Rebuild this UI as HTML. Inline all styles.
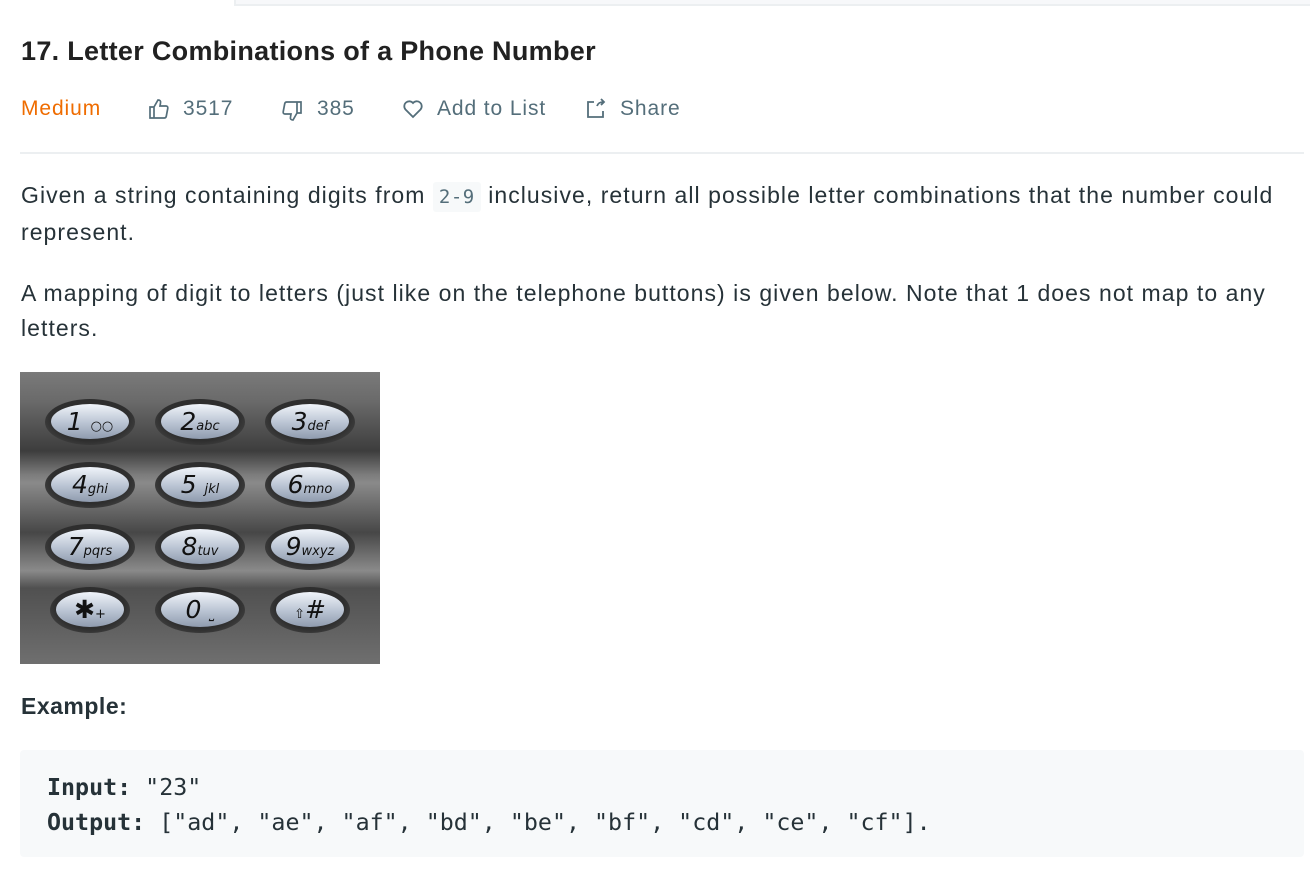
<!DOCTYPE html>
<html><head><meta charset="utf-8"><style>
*{margin:0;padding:0;box-sizing:border-box}
body{width:1310px;height:878px;overflow:hidden;background:#fff;font-family:"Liberation Sans",Helvetica,Arial,sans-serif;color:#263238;position:relative}
.top{position:absolute;left:234px;top:0;width:1076px;height:6px;background:#f7f8fa;border-left:2px solid #eceff1;border-bottom:2px solid #eceff1}
h1{position:absolute;left:21px;top:36px;font-size:27px;font-weight:600;color:#212121;letter-spacing:0.3px;white-space:nowrap}
.meta{position:absolute;top:96px;left:21px;font-size:21px;color:#546e7a;height:26px;line-height:26px;letter-spacing:0.9px}
.meta span{position:absolute;white-space:nowrap}
.meta svg{position:absolute;top:1px}
.hr{position:absolute;left:20px;top:152px;width:1284px;height:2px;background:#eceff1}
p{position:absolute;left:21px;font-size:23px;line-height:35px;width:1285px;letter-spacing:1.05px;white-space:nowrap}
code.i{font-family:"DejaVu Sans Mono",monospace;font-size:19px;background:#f7f9fa;color:#546e7a;padding:4px 6px;border-radius:3px;letter-spacing:0.5px}
.pad{position:absolute;left:20px;top:372px;width:360px;height:292px;background:linear-gradient(#7a7a7a 0%,#6a6a6a 10%,#3d3d3d 27%,#7b7b7b 35%,#8a8a8a 38%,#474747 55%,#8a8a8a 68%,#505050 74%,#6f6f6f 100%)}
.k{position:absolute;width:90px;height:46px;border-radius:50%;background:radial-gradient(ellipse at 50% 40%,#2e2e2e 60%,#555 100%)}
.k i{position:absolute;left:6px;top:5px;width:78px;height:35px;border-radius:50%;background:linear-gradient(#f0f4fa,#b9c3d2 55%,#8f9bae);font-style:italic;font-size:25px;color:#111;text-align:center;line-height:35px;font-family:"DejaVu Sans",sans-serif;font-weight:300}
.k i small{font-size:13px}
.ex{position:absolute;left:21px;top:693px;font-size:23px;font-weight:700;letter-spacing:0.5px}
pre{position:absolute;left:20px;top:750px;width:1284px;height:107px;background:#f7f9fa;border-radius:4px;padding:20px 27px;font-family:"DejaVu Sans Mono",monospace;font-size:23.3px;line-height:35px;color:#263238}
</style></head><body>
<div class="top"></div>
<h1>17. Letter Combinations of a Phone Number</h1>
<div class="meta">
<span style="left:0;color:#ef6c00">Medium</span>
<svg style="left:126px" width="24" height="24" viewBox="0 0 24 24" fill="none" stroke="#546e7a" stroke-width="1.7"><path d="M3 10h4v11H3zM7 10l4-7c2 0 3 1 2.5 3L13 9h6c1.3 0 2 1 1.8 2.2l-1.5 8c-.2 1-1 1.8-2 1.8H7"/></svg>
<span style="left:162px">3517</span>
<svg style="left:259px;top:3px" width="24" height="24" viewBox="0 0 24 24" fill="none" stroke="#546e7a" stroke-width="1.7"><path d="M21 14h-4V3h4zM17 14l-4 7c-2 0-3-1-2.5-3L11 15H5c-1.3 0-2-1-1.8-2.2l1.5-8C4.9 3.8 5.7 3 6.7 3H17"/></svg>
<span style="left:296px">385</span>
<svg style="left:380px" width="24" height="24" viewBox="0 0 24 24" fill="none" stroke="#546e7a" stroke-width="1.8"><path d="M12 20l-7.5-7.5A4.5 4.5 0 0 1 12 6a4.5 4.5 0 0 1 7.5 6.5z"/></svg>
<span style="left:416px">Add to List</span>
<svg style="left:563px" width="24" height="24" viewBox="0 0 24 24" fill="none" stroke="#546e7a" stroke-width="1.8"><path d="M10 5H4v15h15v-6M13 9c1-3 3-4 7-4M17 2l3 3-3 3"/></svg>
<span style="left:599px">Share</span>
</div>
<div class="hr"></div>
<p style="top:178px">Given a string containing digits from <code class="i">2-9</code> inclusive, return all possible letter combinations that the number could<br>represent.</p>
<p style="top:276px">A mapping of digit to letters (just like on the telephone buttons) is given below. Note that 1 does not map to any<br>letters.</p>
<div class="pad">
<div class="k" style="left:25px;top:27px"><i>1 <small>○○</small></i></div>
<div class="k" style="left:135px;top:27px"><i>2<small>abc</small></i></div>
<div class="k" style="left:245px;top:27px"><i>3<small>def</small></i></div>
<div class="k" style="left:25px;top:90px"><i>4<small>ghi</small></i></div>
<div class="k" style="left:135px;top:90px"><i>5 <small>jkl</small></i></div>
<div class="k" style="left:245px;top:90px"><i>6<small>mno</small></i></div>
<div class="k" style="left:25px;top:152px"><i>7<small>pqrs</small></i></div>
<div class="k" style="left:135px;top:152px"><i>8<small>tuv</small></i></div>
<div class="k" style="left:245px;top:152px"><i>9<small>wxyz</small></i></div>
<div class="k" style="left:30px;top:215px;width:80px"><i style="width:68px">✱<small>+</small></i></div>
<div class="k" style="left:135px;top:215px"><i>0 <small>⎵</small></i></div>
<div class="k" style="left:250px;top:215px;width:80px"><i style="width:68px"><small>⇧</small>#</i></div>
</div>
<div class="ex">Example:</div>
<pre><b>Input:</b> "23"
<b>Output:</b> ["ad", "ae", "af", "bd", "be", "bf", "cd", "ce", "cf"].</pre>
</body></html>
